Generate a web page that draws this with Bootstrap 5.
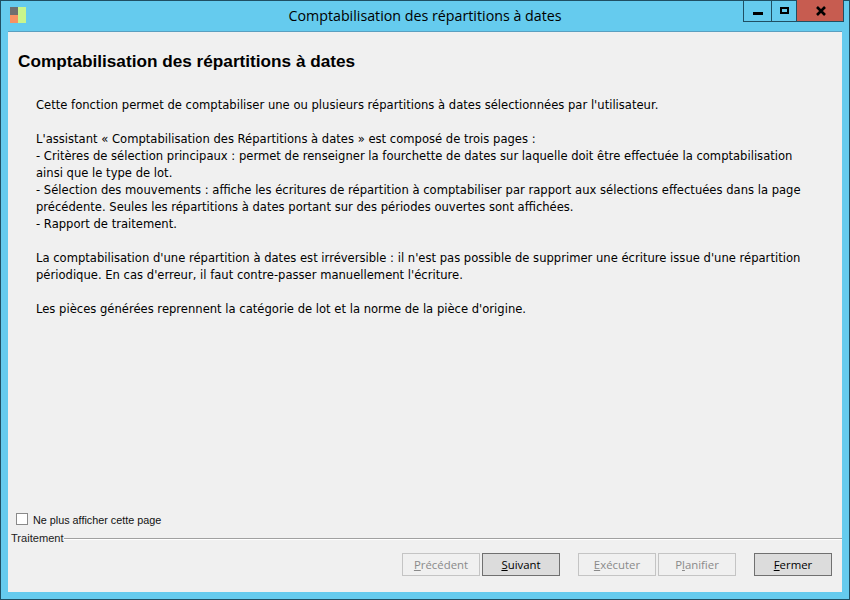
<!DOCTYPE html>
<html lang="fr">
<head>
  <meta charset="UTF-8" />
  <meta name="viewport" content="width=device-width, initial-scale=1.0" />
  <title>Comptabilisation des répartitions à dates</title>
  <link href="https://cdn.jsdelivr.net/npm/bootstrap@5.3.3/dist/css/bootstrap.min.css" rel="stylesheet" />
  <style>
    html, body {
      margin: 0;
      height: 600px;
      overflow: hidden;
    }
    body {
      background-color: #65cbee;
      font-family: "Open Sans", sans-serif;
      color: #000;
    }
    .win-frame {
      width: 850px;
      height: 600px;
      padding: 0 8px 8px;
      background-color: #65cbee;
      box-shadow: inset 0 0 0 1px #1f4f63;
    }
    .win-title {
      height: 31px;
    }
    .win-icon {
      width: 18px;
      height: 17px;
      margin: 7px 0 0 2px;
    }
    .win-caption {
      font-size: 14.25px;
      line-height: 31px;
      left: 0;
      right: 0;
      top: 0;
    }
    .win-controls {
      height: 22px;
      margin-right: -2px;
      border: 1px solid #1f4f63;
      border-top: 0;
    }
    .ctl-min, .ctl-max {
      border-right: 1px solid #1f4f63;
    }
    .ctl-min { width: 28px; }
    .ctl-max { width: 25px; }
    .ctl-close {
      width: 46px;
      background-color: #c75c50;
    }
    .win-client {
      height: 561px;
      background-color: #f0f0f0;
      border-top: 1px solid #5a9fc0;
    }
    .page-head {
      font-family: "Liberation Sans", sans-serif;
      font-size: 17.2px;
      font-weight: 700;
      line-height: 20px;
      margin: 0;
      padding: 19px 0 0 10px;
    }
    .page-text {
      font-family: "DejaVu Sans", sans-serif;
      font-size: 11.59px;
      line-height: 17px;
      padding: 26px 10px 0 28px;
      margin: 0;
      height: 442px;
    }
    .skip-row {
      font-family: "Liberation Sans", sans-serif;
      font-size: 10.8px;
      line-height: 14px;
      height: 14px;
      padding-left: 8px;
      color: #111;
    }
    .skip-box {
      width: 12px;
      height: 12px;
      border: 1px solid #8a8a8a;
      background-color: #fff;
      margin: -2px 5px 0 0;
    }
    .group-row {
      font-family: "Liberation Sans", sans-serif;
      font-size: 11.1px;
      line-height: 13px;
      margin-top: 5px;
      padding-left: 3px;
      color: #222;
    }
    .group-line {
      height: 2px;
      background-color: #fff;
      border-top: 1px solid #a0a0a0;
    }
    .btn-row {
      padding: 8px 10px 0 0;
    }
    .win-btn {
      width: 78px;
      height: 23px;
      padding: 0;
      font-size: 11.4px;
      line-height: 21px;
      border-radius: 0;
      border: 1px solid #707070;
      background-color: #dcdcdc;
      color: #000;
    }
    .win-btn:disabled {
      border-color: #c4c4c4;
      background-color: #f0f0f0;
      color: #8a8a8a;
      opacity: 1;
    }
    .gap-near { margin-left: 2px; }
    .gap-far { margin-left: 18px; }
  </style>
</head>
<body>
  <div class="win-frame">
    <div class="win-title d-flex justify-content-between position-relative">
      <svg class="win-icon" viewBox="0 0 18 17">
        <rect x="0" y="0" width="8" height="8" fill="#6f6f6f" />
        <rect x="0" y="8" width="8" height="8" fill="#f79263" />
        <rect x="8" y="0" width="8" height="16" fill="#c9f58c" />
      </svg>
      <div class="win-caption position-absolute text-center">Comptabilisation des répartitions à dates</div>
      <div class="win-controls d-flex position-relative">
        <div class="ctl-min d-flex align-items-center justify-content-center">
          <svg width="12" height="13" viewBox="0 0 12 13"><rect x="1" y="8" width="10" height="3" fill="#000" /></svg>
        </div>
        <div class="ctl-max d-flex align-items-center justify-content-center">
          <svg width="12" height="13" viewBox="0 0 12 13"><rect x="3" y="4" width="7" height="5" fill="none" stroke="#000" stroke-width="2" /></svg>
        </div>
        <div class="ctl-close d-flex align-items-center justify-content-center">
          <svg width="12" height="13" viewBox="0 0 12 13"><path d="M3 3 L11 11 M11 3 L3 11" stroke="#000" stroke-width="2.6" /></svg>
        </div>
      </div>
    </div>
    <div class="win-client">
      <h1 class="page-head">Comptabilisation des répartitions à dates</h1>
      <p class="page-text">
        Cette fonction permet de comptabiliser une ou plusieurs répartitions à dates sélectionnées par l'utilisateur.<br /><br />
        L'assistant « Comptabilisation des Répartitions à dates » est composé de trois pages :<br />
        - Critères de sélection principaux : permet de renseigner la fourchette de dates sur laquelle doit être effectuée la comptabilisation<br />
        ainsi que le type de lot.<br />
        - Sélection des mouvements : affiche les écritures de répartition à comptabiliser par rapport aux sélections effectuées dans la page<br />
        précédente. Seules les répartitions à dates portant sur des périodes ouvertes sont affichées.<br />
        - Rapport de traitement.<br /><br />
        La comptabilisation d'une répartition à dates est irréversible : il n'est pas possible de supprimer une écriture issue d'une répartition<br />
        périodique. En cas d'erreur, il faut contre-passer manuellement l'écriture.<br /><br />
        Les pièces générées reprennent la catégorie de lot et la norme de la pièce d'origine.
      </p>
      <div class="skip-row d-flex align-items-center">
        <span class="skip-box"></span>
        <span>Ne plus afficher cette page</span>
      </div>
      <div class="group-row d-flex align-items-center">
        <span>Traitement</span>
        <div class="group-line flex-grow-1"></div>
      </div>
      <div class="btn-row d-flex justify-content-end">
        <button class="win-btn" disabled><u>P</u>récédent</button>
        <button class="win-btn gap-near"><u>S</u>uivant</button>
        <button class="win-btn gap-far" disabled><u>E</u>xécuter</button>
        <button class="win-btn gap-near" disabled>P<u>l</u>anifier</button>
        <button class="win-btn gap-far"><u>F</u>ermer</button>
      </div>
    </div>
  </div>
  <script src="https://cdn.jsdelivr.net/npm/bootstrap@5.3.3/dist/js/bootstrap.bundle.min.js"></script>
</body>
</html>
